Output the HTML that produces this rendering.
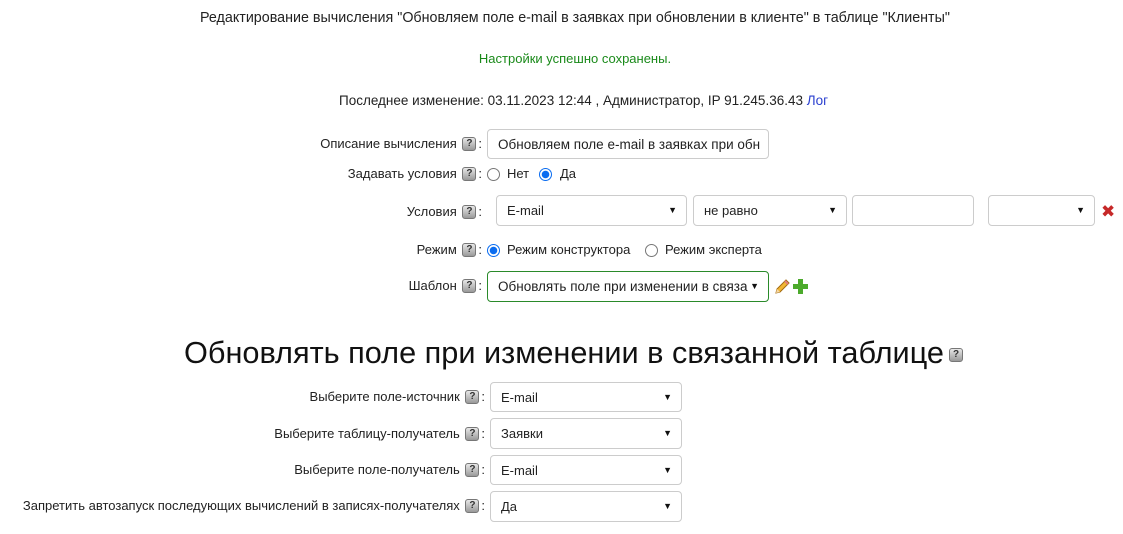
<!DOCTYPE html>
<html><head><meta charset="utf-8"><style>
body{margin:0;width:1123px;height:534px;background:#fff;font-family:"Liberation Sans","DejaVu Sans",sans-serif;font-size:13px;color:#222;position:relative;overflow:hidden}
.a{position:absolute;white-space:nowrap}
.r{position:absolute;white-space:nowrap;text-align:right;line-height:16px}
.h{display:inline-block;width:12px;height:12px;border:1px solid #777;border-radius:3px;background:linear-gradient(#e8e8e8,#999);color:#333;font-size:10px;font-weight:bold;line-height:12px;text-align:center;vertical-align:top;margin:1px 2px 0}
.box{position:absolute;border:1px solid #ccc;border-radius:4px;background:#fff;box-sizing:border-box;padding-left:10px;line-height:29px;overflow:hidden;white-space:nowrap}
.box span{display:block;overflow:hidden}
.sel::after{content:"▼";position:absolute;right:9px;top:0;font-size:9px;color:#111}
.rad{position:absolute;width:11px;height:11px;border:1px solid #777;border-radius:50%;background:#fff}
.rad.on{border:1px solid #0a6cf0;background:radial-gradient(#0a6cf0 0 3.5px,#fff 4px)}
</style></head><body>
<div class="a" style="left:0;width:1150px;text-align:center;top:10px;font-size:14.3px">Редактирование вычисления "Обновляем поле e-mail в заявках при обновлении в клиенте" в таблице "Клиенты"</div>
<div class="a" style="left:0;width:1150px;text-align:center;top:51px;color:#1a8a1a">Настройки успешно сохранены.</div>
<div class="a" style="left:339px;top:93px;font-size:13.5px">Последнее изменение: 03.11.2023 12:44 , Администратор, IP 91.245.36.43 <span style="color:#2a3fcf">Лог</span></div>

<div class="r" style="right:641px;top:136px">Описание вычисления <span class="h">?</span>:</div>
<div class="box" style="left:487px;top:129px;width:282px;height:30px;font-size:13.5px"><span style="width:262px">Обновляем поле e-mail в заявках при обновлении</span></div>

<div class="r" style="right:641px;top:166px">Задавать условия <span class="h">?</span>:</div>
<div class="rad" style="left:487px;top:168px"></div><div class="a" style="left:507px;top:166px">Нет</div>
<div class="rad on" style="left:539px;top:168px"></div><div class="a" style="left:560px;top:166px">Да</div>

<div class="r" style="right:641px;top:204px">Условия <span class="h">?</span>:</div>
<div class="box sel" style="left:496px;top:195px;width:191px;height:31px">E-mail</div>
<div class="box sel" style="left:693px;top:195px;width:154px;height:31px">не равно</div>
<div class="box" style="left:852px;top:195px;width:122px;height:31px"></div>
<div class="box sel" style="left:988px;top:195px;width:107px;height:31px"></div>
<div class="a" style="left:1101px;top:203px;color:#c62828;font-size:17px;font-weight:bold;line-height:18px">✖</div>

<div class="r" style="right:641px;top:242px">Режим <span class="h">?</span>:</div>
<div class="rad on" style="left:487px;top:244px"></div><div class="a" style="left:507px;top:242px">Режим конструктора</div>
<div class="rad" style="left:645px;top:244px"></div><div class="a" style="left:665px;top:242px">Режим эксперта</div>

<div class="r" style="right:641px;top:278px">Шаблон <span class="h">?</span>:</div>
<div class="box sel" style="left:487px;top:271px;width:282px;height:31px;border-color:#2a8a2a;font-size:13.5px"><span style="width:250px">Обновлять поле при изменении в связанной</span></div>
<svg class="a" style="left:773px;top:278px" width="18" height="18" viewBox="0 0 18 18"><path d="M3 15 L4 11 L13 2 L16 5 L7 14 Z" fill="#f2b632" stroke="#a36a10" stroke-width="1"/><path d="M3 15 L4 11 L7 14 Z" fill="#f5d9a8"/><path d="M12 3 L15 6" stroke="#e07a7a" stroke-width="2"/></svg>
<div class="a" style="left:793px;top:279px;width:15px;height:15px"><div style="position:absolute;left:5px;top:0;width:5px;height:15px;background:#4caa2c"></div><div style="position:absolute;left:0;top:5px;width:15px;height:5px;background:#4caa2c"></div></div>

<div class="a" style="left:184px;top:334px;font-size:30.7px;color:#111;line-height:38px">Обновлять поле при изменении в связанной таблице<span class="h" style="vertical-align:middle;margin-left:5px">?</span></div>

<div class="r" style="right:638px;top:389px">Выберите поле-источник <span class="h">?</span>:</div>
<div class="box sel" style="left:490px;top:382px;width:192px;height:30px">E-mail</div>
<div class="r" style="right:638px;top:426px">Выберите таблицу-получатель <span class="h">?</span>:</div>
<div class="box sel" style="left:490px;top:418px;width:192px;height:31px">Заявки</div>
<div class="r" style="right:638px;top:462px">Выберите поле-получатель <span class="h">?</span>:</div>
<div class="box sel" style="left:490px;top:455px;width:192px;height:30px">E-mail</div>
<div class="r" style="right:638px;top:498px">Запретить автозапуск последующих вычислений в записях-получателях <span class="h">?</span>:</div>
<div class="box sel" style="left:490px;top:491px;width:192px;height:31px">Да</div>
</body></html>
